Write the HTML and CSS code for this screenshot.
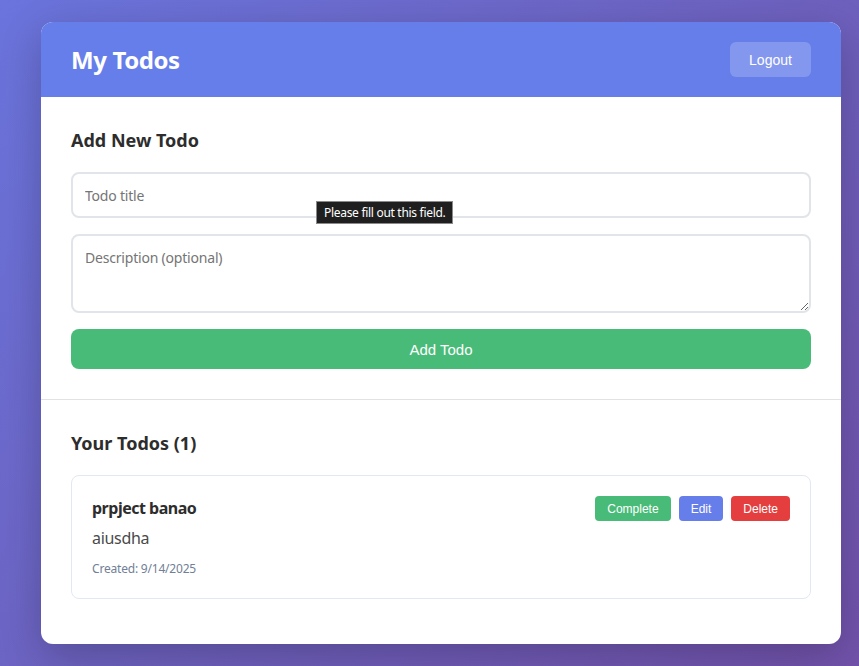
FILE: index.html
```html
<!DOCTYPE html>
<html>
<head>
<meta charset="utf-8">
<link rel="stylesheet" href="styles.css">
</head>
<body>
<div class="app">
  <header class="topbar">
    <h1 class="brand">My Todos</h1>
    <button class="logout">Logout</button>
  </header>
  <section class="add-section">
    <h2 class="section-title">Add New Todo</h2>
    <form class="todo-form">
      <div class="field">
        <input class="text-input" type="text" placeholder="Todo title">
        <div class="tooltip">Please fill out this field.</div>
      </div>
      <textarea class="text-area" placeholder="Description (optional)"></textarea>
      <button type="button" class="add-btn">Add Todo</button>
    </form>
  </section>
  <section class="list-section">
    <h2 class="section-title">Your Todos (1)</h2>
    <div class="todo-item">
      <div class="todo-body">
        <div class="todo-title">prpject banao</div>
        <div class="todo-desc">aiusdha</div>
        <div class="todo-date">Created: 9/14/2025</div>
      </div>
      <div class="todo-actions">
        <button class="act act-complete">Complete</button>
        <button class="act act-edit">Edit</button>
        <button class="act act-delete">Delete</button>
      </div>
    </div>
  </section>
</div>
</body>
</html>
```

FILE: styles.css
```css
* { box-sizing: border-box; }
html, body { margin: 0; }
body {
  min-height: 100vh;
  padding: 22px 18px 40px 41px;
  background: linear-gradient(135deg, #6a74dc 0%, #6d62c0 50%, #7252ab 100%);
  background-attachment: fixed;
  font-family: "Noto Sans", "Open Sans", sans-serif;
  color: #333;
}
.app {
  width: 800px;
  background: #fff;
  border-radius: 12px;
  overflow: hidden;
  box-shadow: 0 12px 40px rgba(0, 0, 0, 0.22);
}
.topbar {
  background: #667eea;
  display: flex;
  align-items: center;
  justify-content: space-between;
  padding: 20px 30px;
  height: 75px;
}
.brand {
  margin: 0;
  color: #fff;
  font-size: 24px;
  font-weight: 700;
  line-height: 32px;
  letter-spacing: -0.4px;
}
.logout {
  height: 35px;
  width: 81px;
  border: none;
  border-radius: 6px;
  background: rgba(255, 255, 255, 0.2);
  color: #fff;
  font-family: "Liberation Sans", Arial, sans-serif;
  font-size: 14px;
  cursor: pointer;
}
.add-section {
  padding: 30px;
  border-bottom: 1px solid #e2e2e2;
}
.section-title {
  margin: 0 0 18px;
  font-size: 18px;
  font-weight: 700;
  line-height: 27px;
  color: #2d2d2d;
}
.todo-form {
  display: flex;
  flex-direction: column;
  gap: 16px;
}
.field { position: relative; }
.text-input, .text-area {
  width: 100%;
  border: 2px solid #e1e5e9;
  border-radius: 8px;
  padding: 12px;
  font-family: "Noto Sans", "Open Sans", sans-serif;
  font-size: 14px;
  letter-spacing: -0.2px;
  color: #333;
  background: #fff;
  outline: none;
}
.text-input { height: 46px; display: block; }
.text-area { height: 79px; display: block; resize: vertical; }
.text-input::placeholder, .text-area::placeholder { color: #757575; }
.tooltip {
  position: absolute;
  left: 245px;
  top: 29px;
  background: #1f1f1f;
  border: 1px solid #8a8a8a;
  color: #fff;
  font-size: 12px;
  letter-spacing: -0.3px;
  line-height: 21px;
  padding: 0 7px;
  white-space: nowrap;
}
.add-btn {
  height: 40px;
  border: none;
  border-radius: 8px;
  background: #48bb78;
  color: #fff;
  font-family: "Liberation Sans", Arial, sans-serif;
  font-size: 15px;
  cursor: pointer;
}
.list-section {
  padding: 30px 30px 45px;
}
.todo-item {
  display: flex;
  justify-content: space-between;
  align-items: flex-start;
  border: 1px solid #e2e8f0;
  border-radius: 8px;
  padding: 20px;
}
.todo-title {
  font-size: 16px;
  font-weight: 700;
  line-height: 24px;
  color: #2d2d2d;
  letter-spacing: -0.5px;
  margin-bottom: 6px;
}
.todo-desc {
  font-size: 16px;
  line-height: 24px;
  color: #4a4a4a;
  letter-spacing: -0.3px;
  margin-bottom: 10px;
}
.todo-date {
  font-size: 12px;
  line-height: 18px;
  color: #718096;
  letter-spacing: -0.2px;
}
.todo-actions {
  display: flex;
  gap: 8px;
}
.act {
  height: 25px;
  border: none;
  border-radius: 4px;
  color: #fff;
  font-family: "Liberation Sans", Arial, sans-serif;
  font-size: 12px;
  padding: 0 12px;
  cursor: pointer;
}
.act-complete { background: #48bb78; }
.act-edit { background: #667eea; }
.act-delete { background: #e53e3e; }
```
